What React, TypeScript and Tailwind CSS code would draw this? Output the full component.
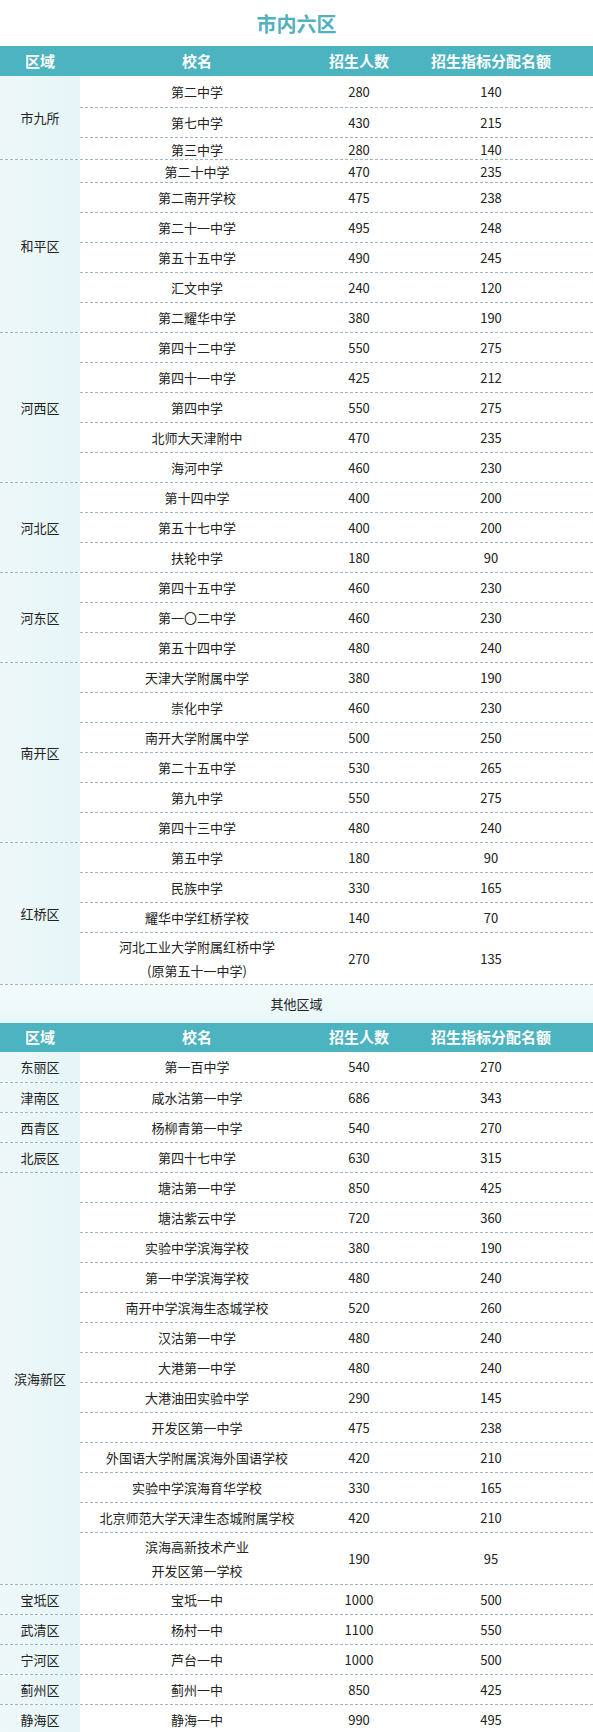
import React from "react";

type Row = { name: string; a: string; b: string; h?: number };
type Group = { region: string; rows: Row[] };

const section1: Group[] = [
  {
    region: "市九所",
    rows: [
      { name: "第二中学", a: "280", b: "140", h: 31 },
      { name: "第七中学", a: "430", b: "215" },
      { name: "第三中学", a: "280", b: "140", h: 22 },
    ],
  },
  {
    region: "和平区",
    rows: [
      { name: "第二十中学", a: "470", b: "235", h: 22 },
      { name: "第二南开学校", a: "475", b: "238" },
      { name: "第二十一中学", a: "495", b: "248" },
      { name: "第五十五中学", a: "490", b: "245" },
      { name: "汇文中学", a: "240", b: "120" },
      { name: "第二耀华中学", a: "380", b: "190" },
    ],
  },
  {
    region: "河西区",
    rows: [
      { name: "第四十二中学", a: "550", b: "275" },
      { name: "第四十一中学", a: "425", b: "212" },
      { name: "第四中学", a: "550", b: "275" },
      { name: "北师大天津附中", a: "470", b: "235" },
      { name: "海河中学", a: "460", b: "230" },
    ],
  },
  {
    region: "河北区",
    rows: [
      { name: "第十四中学", a: "400", b: "200" },
      { name: "第五十七中学", a: "400", b: "200" },
      { name: "扶轮中学", a: "180", b: "90" },
    ],
  },
  {
    region: "河东区",
    rows: [
      { name: "第四十五中学", a: "460", b: "230" },
      { name: "第一〇二中学", a: "460", b: "230" },
      { name: "第五十四中学", a: "480", b: "240" },
    ],
  },
  {
    region: "南开区",
    rows: [
      { name: "天津大学附属中学", a: "380", b: "190" },
      { name: "崇化中学", a: "460", b: "230" },
      { name: "南开大学附属中学", a: "500", b: "250" },
      { name: "第二十五中学", a: "530", b: "265" },
      { name: "第九中学", a: "550", b: "275" },
      { name: "第四十三中学", a: "480", b: "240" },
    ],
  },
  {
    region: "红桥区",
    rows: [
      { name: "第五中学", a: "180", b: "90" },
      { name: "民族中学", a: "330", b: "165" },
      { name: "耀华中学红桥学校", a: "140", b: "70" },
      { name: "河北工业大学附属红桥中学\n(原第五十一中学)", a: "270", b: "135", h: 52 },
    ],
  },
];

const section2: Group[] = [
  { region: "东丽区", rows: [{ name: "第一百中学", a: "540", b: "270", h: 30 }] },
  { region: "津南区", rows: [{ name: "咸水沽第一中学", a: "686", b: "343" }] },
  { region: "西青区", rows: [{ name: "杨柳青第一中学", a: "540", b: "270" }] },
  { region: "北辰区", rows: [{ name: "第四十七中学", a: "630", b: "315" }] },
  {
    region: "滨海新区",
    rows: [
      { name: "塘沽第一中学", a: "850", b: "425" },
      { name: "塘沽紫云中学", a: "720", b: "360" },
      { name: "实验中学滨海学校", a: "380", b: "190" },
      { name: "第一中学滨海学校", a: "480", b: "240" },
      { name: "南开中学滨海生态城学校", a: "520", b: "260" },
      { name: "汉沽第一中学", a: "480", b: "240" },
      { name: "大港第一中学", a: "480", b: "240" },
      { name: "大港油田实验中学", a: "290", b: "145" },
      { name: "开发区第一中学", a: "475", b: "238" },
      { name: "外国语大学附属滨海外国语学校", a: "420", b: "210" },
      { name: "实验中学滨海育华学校", a: "330", b: "165" },
      { name: "北京师范大学天津生态城附属学校", a: "420", b: "210" },
      { name: "滨海高新技术产业\n开发区第一学校", a: "190", b: "95", h: 52 },
    ],
  },
  { region: "宝坻区", rows: [{ name: "宝坻一中", a: "1000", b: "500" }] },
  { region: "武清区", rows: [{ name: "杨村一中", a: "1100", b: "550" }] },
  { region: "宁河区", rows: [{ name: "芦台一中", a: "1000", b: "500" }] },
  { region: "蓟州区", rows: [{ name: "蓟州一中", a: "850", b: "425" }] },
  { region: "静海区", rows: [{ name: "静海一中", a: "990", b: "495" }] },
];

function Header({ tall }: { tall: boolean }) {
  return (
    <div
      className={
        "grid grid-cols-[80px_234px_90px_174px_1fr] items-center bg-[#4cb3c0] text-[15px] font-bold text-white " +
        (tall ? "h-[30px]" : "h-[29px]")
      }
    >
      <div className="text-center">区域</div>
      <div className="text-center">校名</div>
      <div className="text-center">招生人数</div>
      <div className="text-center">招生指标分配名额</div>
      <div />
    </div>
  );
}

function GroupBlock({ g, top, bottom }: { g: Group; top: boolean; bottom?: boolean }) {
  return (
    <div
      className={
        "flex " +
        (top ? "border-t border-dashed border-[#9fb7be] " : "") +
        (bottom ? "border-b border-dashed border-[#9fb7be]" : "")
      }
    >
      <div className="flex w-[80px] shrink-0 items-center justify-center bg-gradient-to-r from-[#eef8fa] to-[#e5f5f7] text-[13px] text-[#222]">
        {g.region}
      </div>
      <div className="flex flex-1 flex-col">
        {g.rows.map((r, i) => {
          const h = r.h ?? (i === 0 ? 29 : 30);
          return (
            <div
              key={i}
              style={{ height: h }}
              className={
                "grid grid-cols-[234px_90px_174px_1fr] items-center text-[13px] text-[#222] " +
                (i > 0 ? "border-t border-dashed border-[#9fb7be]" : "")
              }
            >
              <div className="whitespace-pre-line text-center leading-[24px]">{r.name}</div>
              <div className="text-center">{r.a}</div>
              <div className="text-center">{r.b}</div>
              <div />
            </div>
          );
        })}
      </div>
    </div>
  );
}

export default function App() {
  return (
    <div
      className="h-[1732px] w-[593px] overflow-hidden bg-white"
      style={{ fontFamily: '"Noto Sans CJK SC", "Noto Sans", sans-serif' }}
    >
      <div className="flex h-[46px] items-center justify-center pt-[2px] text-[20px] font-bold text-[#52b1bc]">
        市内六区
      </div>
      <Header tall />
      {section1.map((g, i) => (
        <GroupBlock key={g.region} g={g} top={i > 0} bottom={i === section1.length - 1} />
      ))}
      <div className="flex h-[38px] items-center justify-center bg-gradient-to-b from-[#f3fbfc] to-[#e9f7f8] text-[13px] text-[#222]">
        其他区域
      </div>
      <Header tall={false} />
      {section2.map((g, i) => (
        <GroupBlock key={g.region} g={g} top={i > 0} />
      ))}
    </div>
  );
}
